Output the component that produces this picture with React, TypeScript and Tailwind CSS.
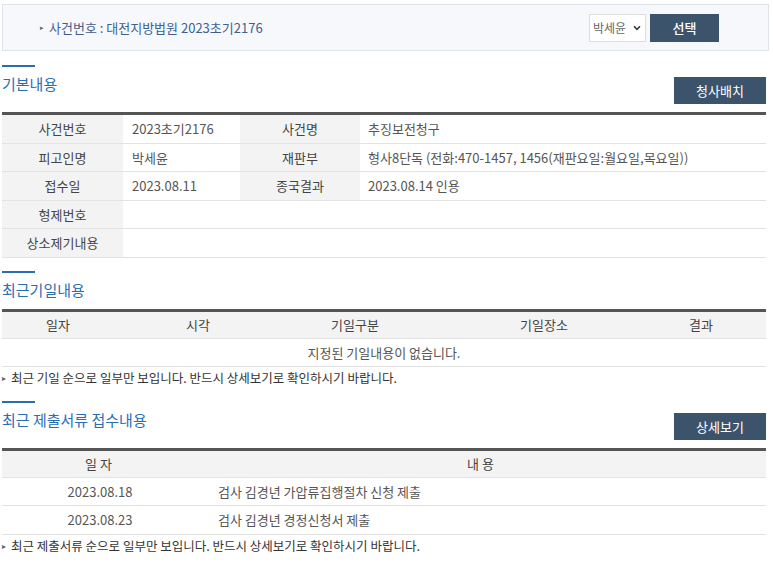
import React from 'react';

const font = { fontFamily: '"Noto Sans CJK KR", "Noto Sans", sans-serif' };

const SectionTitle: React.FC<{ title: string; action?: string }> = ({ title, action }) => (
  <div className="flex items-end justify-between">
    <div>
      <div className="h-[2px] w-[33px] bg-[#2a6db5]" />
      <h2 className="mt-[7px] text-[15px] leading-[20px] text-[#2a6db5]">{title}</h2>
    </div>
    {action && (
      <button className="mb-[-10px] h-[27px] w-[92px] bg-[#3b546c] text-[13px] text-white">{action}</button>
    )}
  </div>
);

const Note: React.FC<{ text: string }> = ({ text }) => (
  <p className="flex h-[22px] items-center gap-[5px] text-[12.5px] text-[#333]">
    <span className="text-[8px] leading-none text-[#666]">▸</span>
    {text}
  </p>
);

const infoRows: [string, string, string?, string?][] = [
  ['사건번호', '2023초기2176', '사건명', '추징보전청구'],
  ['피고인명', '박세윤', '재판부', '형사8단독 (전화:470-1457, 1456(재판요일:월요일,목요일))'],
  ['접수일', '2023.08.11', '종국결과', '2023.08.14 인용'],
  ['형제번호', ''],
  ['상소제기내용', ''],
];

export default function App() {
  return (
    <div className="w-[773px] bg-white px-[2px] pt-[4px] text-[13px] text-[#555]" style={font}>
      {/* case header */}
      <div className="mr-[2px] flex h-[47px] items-center justify-between border border-[#dfe3ea] bg-[#f6f8fc] pl-[37px] pr-[49px]">
        <div className="flex items-center gap-[5px] text-[13px] text-[#3f5f8f]">
          <span className="text-[7px] text-[#666]">▸</span>
          <span>사건번호 : 대전지방법원 2023초기2176</span>
        </div>
        <div className="flex items-center gap-[4px]">
          <div className="flex h-[28px] w-[57px] items-center justify-between border border-[#ddd] bg-white pl-[3px] pr-[4px] text-[12px] text-[#666]">
            <span>박세윤</span>
            <svg width="8" height="6" viewBox="0 0 8 6"><path d="M1 1.2 4 4.3 7 1.2" fill="none" stroke="#333" strokeWidth="1.5" /></svg>
          </div>
          <button className="h-[28px] w-[69px] bg-[#3b546c] text-[13px] font-medium text-white">선택</button>
        </div>
      </div>

      {/* 기본내용 */}
      <div className="mt-[14px] w-[764px]">
        <SectionTitle title="기본내용" action="청사배치" />
        <div className="mt-[18px] border-t-[3px] border-[#555]">
          {infoRows.map(([h1, v1, h2, v2]) => (
            <div key={h1} className="flex h-[28.6px] border-b border-[#e3e3e3]">
              <div className="flex w-[121px] items-center justify-center bg-[#f3f3f3] text-[#444]">{h1}</div>
              <div className={`flex items-center pl-[9px] ${h2 ? 'w-[117px]' : 'flex-1'}`}>{v1}</div>
              {h2 && (
                <>
                  <div className="flex w-[120px] items-center justify-center bg-[#f3f3f3] text-[#444]">{h2}</div>
                  <div className="flex flex-1 items-center pl-[8px]">{v2}</div>
                </>
              )}
            </div>
          ))}
        </div>
      </div>

      {/* 최근기일내용 */}
      <div className="mt-[13px] w-[764px]">
        <SectionTitle title="최근기일내용" />
        <div className="mt-[9px] border-t-[3px] border-[#555]">
          <div className="flex h-[27px] items-center border-b border-[#e3e3e3] bg-[#f3f3f3] text-[#444]">
            <div className="w-[112px] text-center">일자</div>
            <div className="w-[168px] text-center">시각</div>
            <div className="w-[146px] text-center">기일구분</div>
            <div className="w-[232px] text-center">기일장소</div>
            <div className="flex-1 pr-[24px] text-center">결과</div>
          </div>
          <div className="flex h-[28px] items-center justify-center border-b border-[#e3e3e3]">지정된 기일내용이 없습니다.</div>
        </div>
        <Note text="최근 기일 순으로 일부만 보입니다. 반드시 상세보기로 확인하시기 바랍니다." />
      </div>

      {/* 최근 제출서류 접수내용 */}
      <div className="mt-[12px] w-[764px]">
        <SectionTitle title="최근 제출서류 접수내용" action="상세보기" />
        <div className="mt-[18px] border-t-[3px] border-[#555]">
          <div className="flex h-[27px] items-center border-b border-[#e3e3e3] bg-[#f3f3f3] text-[#444]">
            <div className="w-[196px] text-center tracking-[3px]">일자</div>
            <div className="flex-1 text-center tracking-[3px]">내용</div>
          </div>
          {[
            ['2023.08.18', '검사 김경년 가압류집행절차 신청 제출'],
            ['2023.08.23', '검사 김경년 경정신청서 제출'],
          ].map(([d, c]) => (
            <div key={d} className="flex h-[28.5px] items-center border-b border-[#e3e3e3]">
              <div className="w-[196px] text-center">{d}</div>
              <div className="flex-1 pl-[20px]">{c}</div>
            </div>
          ))}
        </div>
        <Note text="최근 제출서류 순으로 일부만 보입니다. 반드시 상세보기로 확인하시기 바랍니다." />
      </div>
    </div>
  );
}
